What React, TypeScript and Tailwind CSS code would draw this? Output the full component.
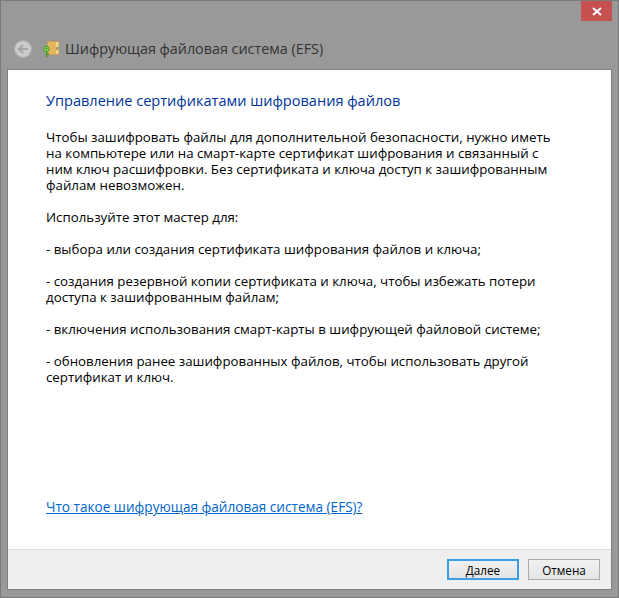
const font = { fontFamily: '"Open Sans", "Noto Sans", sans-serif' };

function BackIcon() {
  return (
    <svg width="18" height="18" viewBox="0 0 18 18">
      <circle cx="9" cy="9" r="8.8" fill="#b3b3b3" />
      <circle cx="9" cy="9" r="7.8" fill="#cbcbcb" />
      <path d="M14 9H5.5M9 5L5 9L9 13" fill="none" stroke="#a6a6a6" strokeWidth="2" />
    </svg>
  );
}

function EfsIcon() {
  return (
    <svg width="16" height="16" viewBox="0 0 16 16">
      <path d="M4.5 0.5H15.5V13.5H4.5Z" fill="#e3b75c" stroke="#c9a04e" strokeWidth="1" />
      <rect x="13" y="1" width="2.5" height="12" fill="#f0d595" />
      <rect x="13.5" y="6" width="1.2" height="3" fill="#8a6a2e" />
      <circle cx="3.5" cy="8" r="2.7" fill="#86d058" stroke="#4d9a2c" strokeWidth="1" />
      <circle cx="3.5" cy="7.5" r="0.7" fill="#2f6b18" />
      <path d="M3.5 10.5V15.5M3.5 13H6M3.5 15H5.5" stroke="#4d9a2c" strokeWidth="1.4" fill="none" />
    </svg>
  );
}

const paragraphs = [
  ['Чтобы зашифровать файлы для дополнительной безопасности, нужно иметь', 'на компьютере или на смарт-карте сертификат шифрования и связанный с', 'ним ключ расшифровки. Без сертификата и ключа доступ к зашифрованным', 'файлам невозможен.'],
  ['Используйте этот мастер для:'],
  ['- выбора или создания сертификата шифрования файлов и ключа;'],
  ['- создания резервной копии сертификата и ключа, чтобы избежать потери', 'доступа к зашифрованным файлам;'],
  ['- включения использования смарт-карты в шифрующей файловой системе;'],
  ['- обновления ранее зашифрованных файлов, чтобы использовать другой', 'сертификат и ключ.'],
];

export default function App() {
  return (
    <div className="flex h-[598px] w-[619px] flex-col border border-[#7a7a7a] bg-[#999999] px-[6px] pb-[7px]" style={font}>
      <div className="flex h-[20px] shrink-0 justify-end">
        <div className="flex w-[31px] items-center justify-center bg-[#c75050]">
          <svg width="10" height="9" viewBox="0 0 10 9">
            <path d="M1 1L9 8M9 1L1 8" stroke="#ffffff" strokeWidth="2" />
          </svg>
        </div>
      </div>
      <div className="flex h-[48px] shrink-0 items-center pt-[8px]">
        <div className="ml-[7px]"><BackIcon /></div>
        <div className="ml-[11px]"><EfsIcon /></div>
        <span className="ml-[6px] text-[14.35px] leading-5 text-[#333333]">Шифрующая файловая система (EFS)</span>
      </div>
      <div className="flex min-h-0 flex-1 flex-col border border-[#808080]">
        <div className="flex flex-1 flex-col bg-white pl-[38px] pt-[20px]">
          <h1 className="text-[14.55px] leading-5 font-normal text-[#003399]">Управление сертификатами шифрования файлов</h1>
          <div className="mt-[19px] flex flex-col gap-4 text-[13.3px] leading-4 text-black">
            {paragraphs.map((lines) => (
              <p key={lines[0]}>
                {lines.map((line) => (
                  <span key={line} className="block whitespace-nowrap">{line}</span>
                ))}
              </p>
            ))}
          </div>
          <a className="mt-[114px] w-fit text-[13.6px] leading-4 text-[#0066cc] underline">Что такое шифрующая файловая система (EFS)?</a>
        </div>
        <div className="flex h-[40px] shrink-0 items-center justify-end gap-[9px] border-t border-[#dfdfdf] bg-[#efefef] pr-[11px]">
          <button className="h-[21px] w-[72px] border-2 border-[#3c9de8] bg-gradient-to-b from-[#f0f0f0] to-[#e5e5e5] text-[11.7px] leading-4 text-black">Далее</button>
          <button className="h-[21px] w-[72px] border border-[#acacac] bg-gradient-to-b from-[#f0f0f0] to-[#e5e5e5] text-[11.7px] leading-4 text-black">Отмена</button>
        </div>
      </div>
    </div>
  );
}
